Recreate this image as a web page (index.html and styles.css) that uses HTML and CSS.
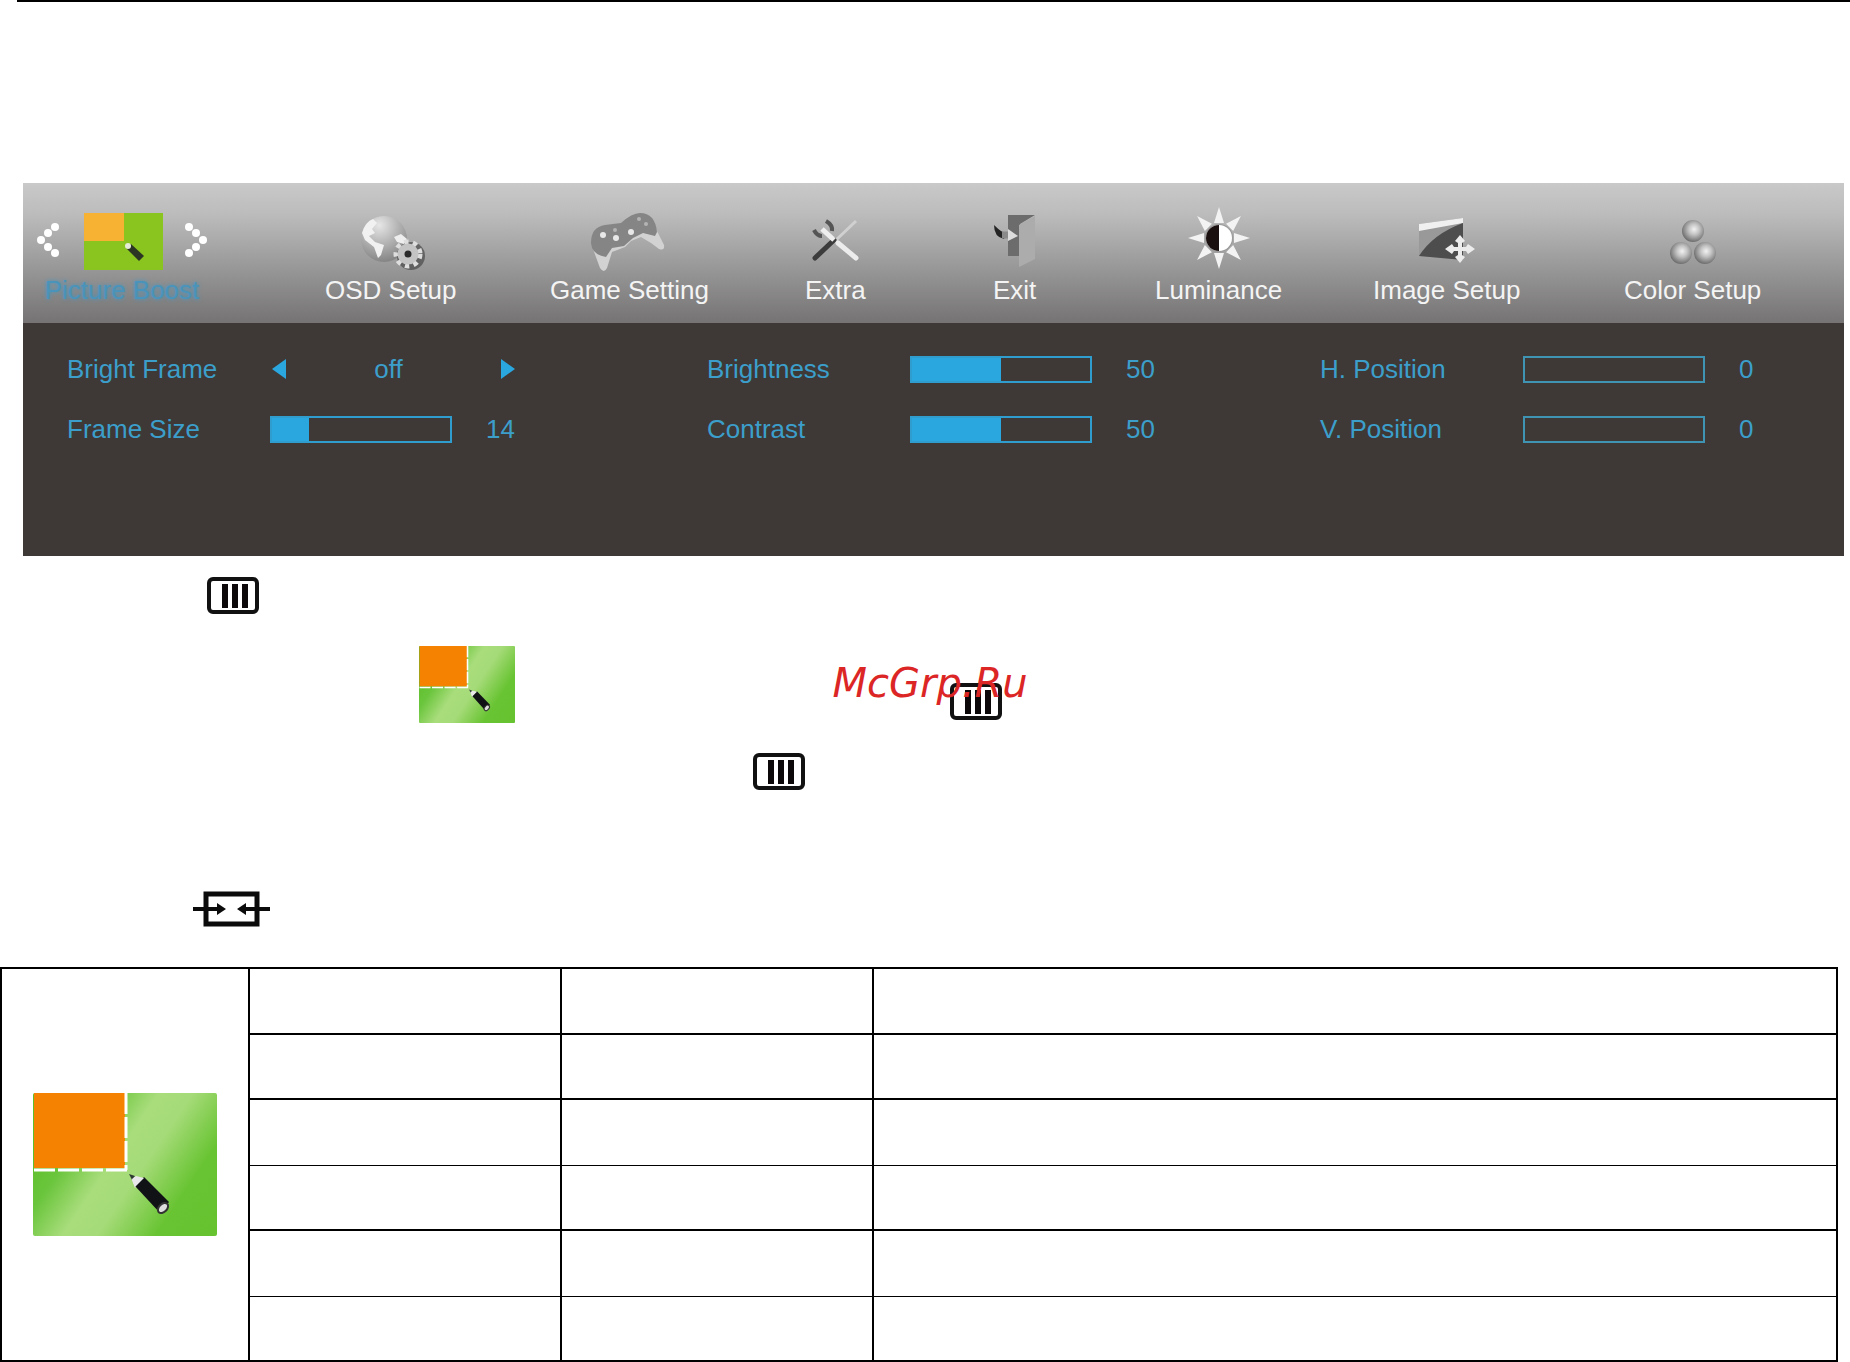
FILE: index.html
```html
<!DOCTYPE html>
<html lang="en">
<head>
<meta charset="utf-8">
<title>Picture Boost</title>
<link rel="stylesheet" href="styles.css">
</head>
<body>
<svg class="defs" width="0" height="0" aria-hidden="true">
  <defs>
    <linearGradient id="sheen" x1="0" y1="0" x2="192" y2="130" gradientUnits="userSpaceOnUse">
      <stop offset="0.15" stop-color="#5fbf2c"/><stop offset="0.28" stop-color="#6ac53c"/>
      <stop offset="0.45" stop-color="#a9dd7c"/><stop offset="0.57" stop-color="#a6db79"/>
      <stop offset="0.78" stop-color="#69c433"/><stop offset="1" stop-color="#66c22f"/>
    </linearGradient>
    <radialGradient id="ball" cx="0.55" cy="0.42" r="0.6">
      <stop offset="0" stop-color="#f2f2f2"/><stop offset="0.4" stop-color="#c4c4c4"/><stop offset="1" stop-color="#686868"/>
    </radialGradient>
    <radialGradient id="sea" cx="0.4" cy="0.2" r="0.8">
      <stop offset="0" stop-color="#e6e6e6"/><stop offset="0.5" stop-color="#b5b5b5"/><stop offset="1" stop-color="#858585"/>
    </radialGradient>
    <symbol id="key" viewBox="0 0 52 37">
      <rect x="2" y="2" width="48" height="33" rx="4" fill="#fff" stroke="#111" stroke-width="4"/>
      <path d="M18 7v24M28 7v24M38 7v24" stroke="#0c0708" stroke-width="6"/>
    </symbol>
    <symbol id="boost" viewBox="0 0 184 143" preserveAspectRatio="none">
      <rect width="184" height="143" rx="2" fill="url(#sheen)"/>
      <rect x="1" width="91" height="75" fill="#f58200"/>
      <path d="M93 0v77" stroke="#fff" stroke-width="3" stroke-dasharray="21 3"/>
      <path d="M94 77H0" stroke="#fff" stroke-width="3" stroke-dasharray="21 3"/>
      <path d="M97 82l10 4-5 9z" fill="#e8e8ea"/>
      <path d="M96 81l6 2-3 4z" fill="#2d3a30"/>
      <path d="M102 93l9-9 25 25-9 11z" fill="#111216"/>
      <path d="M99 86l4-3 8 2-9 9z" fill="#e8e8ea"/>
      <ellipse cx="130" cy="115" rx="4" ry="6" transform="rotate(45 130 115)" fill="#ddd" stroke="#333" stroke-width="2"/>
    </symbol>
  </defs>
</svg>

<header class="rule"></header>

<main>
  <section class="osd">
    <nav class="tabs">
      <button class="tab tab-active" type="button">
        <svg width="170" height="68" viewBox="0 0 170 68" aria-hidden="true">
          <g fill="#fff"><circle cx="18" cy="20" r="4"/><circle cx="11" cy="26" r="4"/><circle cx="4" cy="33" r="4"/><circle cx="11" cy="40" r="4"/><circle cx="18" cy="46" r="4"/>
          <circle cx="152" cy="20" r="4"/><circle cx="159" cy="26" r="4"/><circle cx="166" cy="33" r="4"/><circle cx="159" cy="40" r="4"/><circle cx="152" cy="46" r="4"/></g>
          <rect x="47" y="6" width="79" height="57" fill="#8ac41f"/>
          <rect x="47" y="6" width="40" height="28" fill="#f7b234"/>
          <path d="M94 37l13 12-5 5-13-13z" fill="#2c3423"/><circle cx="91" cy="39" r="3" fill="#e6ead8"/>
        </svg>
        <span>Picture Boost</span>
      </button>
      <button class="tab" type="button">
        <svg width="80" height="68" viewBox="0 0 80 68" aria-hidden="true">
          <circle cx="33" cy="32" r="23" fill="url(#sea)"/>
          <path d="M11 26q3-11 11-14l4 4-5 6 3 4-6 3 6 6 9 3-3 10-3 3-4-11-9-7z" fill="#f1f1f1"/>
          <path d="M43 30l7-3 6 5-3 5-7-2z" fill="#eee"/>
          <circle cx="60" cy="49" r="14" fill="#3b3b3b" opacity="0.6"/>
          <circle cx="57" cy="47" r="11" fill="none" stroke="#dedede" stroke-width="7" stroke-dasharray="4 4"/>
          <circle cx="57" cy="47" r="7" fill="#2b2b2b" stroke="#c4c4c4" stroke-width="7"/>
        </svg>
        <span>OSD Setup</span>
      </button>
      <button class="tab" type="button">
        <svg width="80" height="68" viewBox="0 0 80 68" aria-hidden="true">
          <path d="M4 42L11 61q4 6 7 0L23 45l13-5 6-6 10-4 10 6 8 6q6 2 5-4L67 22 50 22z" fill="#d2d2d2"/>
          <path d="M2 36Q2 20 16 18l16-2Q43 6 51 6q15 0 17 19l-2 4-12-3-10 5-9 8-12 2-6 9Q3 48 2 36z" fill="#858585"/>
          <g fill="#e8e8e8"><circle cx="14" cy="28" r="3"/><circle cx="27" cy="31" r="3"/><circle cx="42" cy="25" r="3"/></g>
          <g fill="#b4b4b4"><circle cx="50" cy="12" r="2"/><circle cx="57" cy="17" r="2"/><circle cx="26" cy="23" r="2"/></g>
        </svg>
        <span>Game Setting</span>
      </button>
      <button class="tab" type="button">
        <svg width="80" height="68" viewBox="0 0 80 68" aria-hidden="true">
          <path d="M61 14L40 34" stroke="#d0d0d0" stroke-width="3"/>
          <path d="M39 33L20 51" stroke="#3c3c3c" stroke-width="5" stroke-linecap="round"/>
          <path d="M27 22l12 11" stroke="#eee" stroke-width="5"/>
          <path d="M31 14q7 4 6 10M19 23q3 6 8 6" fill="none" stroke="#555" stroke-width="4"/>
          <path d="M43 36l18 15" stroke="#ececec" stroke-width="5" stroke-linecap="round"/>
        </svg>
        <span>Extra</span>
      </button>
      <button class="tab" type="button">
        <svg width="80" height="68" viewBox="0 0 80 68" aria-hidden="true">
          <path d="M33 8h27L45 17v32H33z" fill="#6c6c6c"/>
          <path d="M44 18L60 9v43l-16 8z" fill="#acacac"/>
          <path d="M19 18q8 8 12 8l-2 6q-10-2-10-14z" fill="#242424"/>
          <path d="M27 28h6" stroke="#8a8a8a" stroke-width="7"/>
          <path d="M33 22l10 7-10 5z" fill="#ddd"/>
        </svg>
        <span>Exit</span>
      </button>
      <button class="tab" type="button">
        <svg width="80" height="68" viewBox="0 0 80 68" aria-hidden="true">
          <g fill="#f3f3f3">
            <path id="ray" d="M35 16l5-16 5 16z"/>
            <use href="#ray" transform="rotate(45 40 31)"/><use href="#ray" transform="rotate(90 40 31)"/>
            <use href="#ray" transform="rotate(135 40 31)"/><use href="#ray" transform="rotate(180 40 31)"/>
            <use href="#ray" transform="rotate(225 40 31)"/><use href="#ray" transform="rotate(270 40 31)"/>
            <use href="#ray" transform="rotate(315 40 31)"/>
          </g>
          <circle cx="40" cy="31" r="14" fill="#999"/>
          <circle cx="40" cy="31" r="13" fill="#fff"/><path d="M40 18a13 13 0 0 0 0 26z" fill="#1b1010"/>
        </svg>
        <span>Luminance</span>
      </button>
      <button class="tab" type="button">
        <svg width="80" height="68" viewBox="0 0 80 68" aria-hidden="true">
          <path d="M12 17l44-6v42l-44-4z" fill="#999"/>
          <path d="M12 17l44-6v5l-44 8z" fill="#f0f0f0"/>
          <path d="M56 16v37L12 49Q26 27 56 16z" fill="#4d4d4d"/>
          <path d="M53 42m0-14l5 6-3 2v4h4l2-3 7 5-7 5-2-3h-4v4l3 2-5 6-5-6 3-2v-4h-4l-2 3-7-5 7-5 2 3h4v-4l-3-2z" fill="#ececec"/>
        </svg>
        <span>Image Setup</span>
      </button>
      <button class="tab" type="button">
        <svg width="80" height="68" viewBox="0 0 80 68" aria-hidden="true">
          <g fill="url(#ball)"><circle cx="40" cy="24" r="11"/><circle cx="28" cy="46" r="11"/><circle cx="52" cy="46" r="11"/></g>
        </svg>
        <span>Color Setup</span>
      </button>
    </nav>

    <div class="settings">
      <div class="group">
        <div class="row">
          <span class="name">Bright Frame</span>
          <div class="stepper">
            <button type="button" aria-label="Previous"><svg width="14" height="20" viewBox="0 0 14 20"><path d="M0 10L14 0v20z" fill="#2ba7e0"/></svg></button>
            <output>off</output>
            <button class="next" type="button" aria-label="Next"><svg width="14" height="20" viewBox="0 0 14 20"><path d="M14 10L0 0v20z" fill="#2ba7e0"/></svg></button>
          </div>
        </div>
        <div class="row">
          <label class="name" for="frame-size">Frame Size</label>
          <input id="frame-size" type="range" min="0" max="64" value="14" style="--fill:21%">
          <output for="frame-size">14</output>
        </div>
      </div>
      <div class="group">
        <div class="row">
          <label class="name" for="brightness">Brightness</label>
          <input id="brightness" type="range" value="50" style="--fill:50%">
          <output for="brightness">50</output>
        </div>
        <div class="row">
          <label class="name" for="contrast">Contrast</label>
          <input id="contrast" type="range" value="50" style="--fill:50%">
          <output for="contrast">50</output>
        </div>
      </div>
      <div class="group">
        <div class="row">
          <label class="name" for="h-position">H. Position</label>
          <input id="h-position" class="empty" type="range" value="0" style="--fill:0%">
          <output for="h-position">0</output>
        </div>
        <div class="row">
          <label class="name" for="v-position">V. Position</label>
          <input id="v-position" class="empty" type="range" value="0" style="--fill:0%">
          <output for="v-position">0</output>
        </div>
      </div>
    </div>
  </section>

  <section class="steps">
    <div class="step step-open"><svg width="52" height="37"><use href="#key"/></svg></div>
    <div class="step step-select">
      <svg width="96" height="77"><use href="#boost"/></svg>
      <svg class="select-key" width="52" height="37"><use href="#key"/></svg>
      <span class="watermark">McGrp.Ru</span>
    </div>
    <div class="step step-confirm"><svg width="52" height="37"><use href="#key"/></svg></div>
    <div class="step step-exit">
      <svg width="77" height="37" viewBox="0 0 77 37" aria-hidden="true">
        <rect x="13" y="4" width="51" height="30" fill="#fff" stroke="#0b0b0b" stroke-width="5"/>
        <path d="M0 19h26M77 19H51" stroke="#0b0b0b" stroke-width="4"/>
        <path d="M24 13l9 6-9 6zM53 13l-9 6 9 6z" fill="#0b0b0b"/>
      </svg>
    </div>
  </section>

  <table class="options">
    <colgroup><col class="col-icon"><col class="col-item"><col class="col-item"><col></colgroup>
    <tbody>
      <tr><td class="picture" rowspan="6"><svg width="184" height="143"><use href="#boost"/></svg></td><td></td><td></td><td></td></tr>
      <tr><td></td><td></td><td></td></tr>
      <tr class="thin-below"><td></td><td></td><td></td></tr>
      <tr class="thin-above"><td></td><td></td><td></td></tr>
      <tr class="thin-below"><td></td><td></td><td></td></tr>
      <tr class="thin-above"><td></td><td></td><td></td></tr>
    </tbody>
  </table>
</main>
</body>
</html>
```
FILE: styles.css
```css
* {
  box-sizing: border-box;
}

body {
  margin: 0;
  background: #fff;
  font-family: "Liberation Sans", Arial, sans-serif;
  font-size: 26px;
  line-height: 30px;
}

button {
  padding: 0;
  border: 0;
  background: none;
  color: inherit;
  font: inherit;
}

svg {
  display: block;
}

.defs {
  position: absolute;
}

.rule {
  height: 2px;
  margin-left: 17px;
  background: #000;
}

/* On-screen menu */
.osd {
  margin: 181px 6px 0 23px;
  background: #3e3936;
}

.tabs {
  display: grid;
  grid-template-columns: 288fr 225fr 255fr 188fr 162fr 218fr 251fr 220fr;
  justify-items: start;
  padding: 24px 0 18px 14px;
  background: linear-gradient(#c9c9c9, #bcbcbc 22%, #757373);
  color: #f4f4f4;
}

.tab {
  display: flex;
  flex-direction: column;
  align-items: center;
  white-space: nowrap;
}

.tab:not(.tab-active) svg {
  margin: 0 -20px;
}

.tab-active {
  color: #4a93ba;
  text-shadow: 0 0 4px #3e98c8;
}

.settings {
  display: grid;
  grid-template-columns: 640fr 613fr 524fr;
  padding: 31px 0 112px 44px;
  color: #3c9fcb;
}

.group {
  display: flex;
  flex-direction: column;
  gap: 30px;
}

.row {
  display: flex;
  align-items: center;
  height: 30px;
}

.name {
  width: 203px;
}

.stepper {
  display: flex;
  align-items: center;
  justify-content: space-between;
  width: 245px;
  padding-left: 2px;
}

.next {
  padding-left: 10px;
}

input[type="range"] {
  width: 182px;
  height: 27px;
  margin: 0 34px 0 0;
  border: 2px solid #2f9dcd;
  background: linear-gradient(#2ba7e0, #2ba7e0) no-repeat 0 0 / var(--fill) 100%;
  appearance: none;
}

input[type="range"].empty {
  border-color: #3f93b3;
}

input[type="range"]::-webkit-slider-thumb {
  width: 0;
  height: 0;
  appearance: none;
}

/* Key symbols */
.step {
  display: flex;
}

.step-open {
  padding: 21px 0 0 207px;
}

.step-select {
  position: relative;
  align-items: flex-end;
  margin-top: 32px;
  padding-left: 419px;
}

.select-key {
  margin: 0 0 3px 435px;
}

.watermark {
  position: absolute;
  top: 17px;
  left: 45%;
  color: #dc2626;
  font: italic 40px/40px "DejaVu Sans", sans-serif;
}

.step-confirm {
  padding: 30px 0 0 753px;
}

.step-exit {
  padding: 100px 0 40px 193px;
}

/* Options table */
.options {
  width: calc(100% - 12px);
  border-collapse: collapse;
  table-layout: fixed;
}

.col-icon {
  width: 248px;
}

.col-item {
  width: 312px;
}

.options td {
  height: 65px;
  padding: 0;
  border: 2px solid #000;
}

.options tr:nth-child(odd) td {
  height: 66px;
}

.options .picture svg {
  margin: 0 auto;
}

.options .thin-below td {
  border-bottom-width: 1px;
}

.options .thin-above td {
  border-top-width: 1px;
}
```
